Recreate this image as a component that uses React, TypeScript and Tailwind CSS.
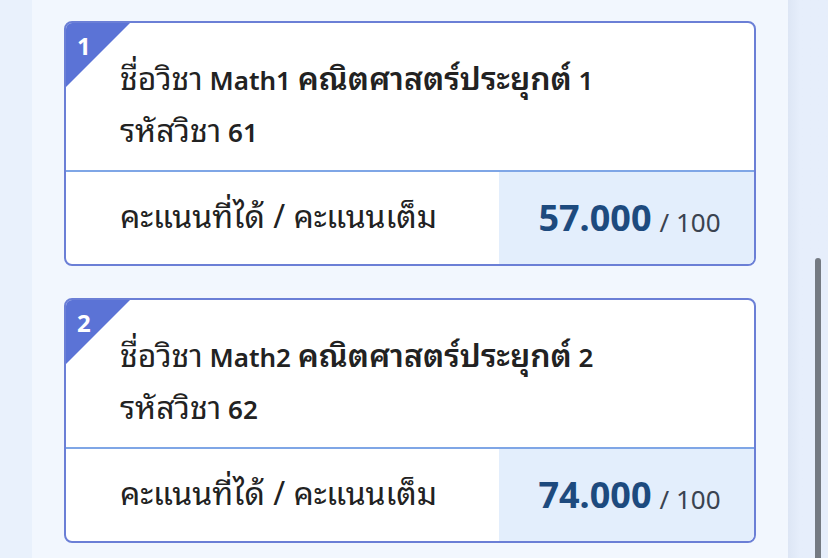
import type { ReactNode } from "react"

const font = `font-['Noto_Sans','Noto_Sans_Thai_Looped','Liberation_Sans',sans-serif]`

// Thai runs are set larger so they sit level with the Latin text next to them
function Th({ children, bold }: { children: ReactNode; bold?: boolean }) {
  return <span className={`text-[32px] ${bold ? "font-semibold" : "font-normal"}`}>{children}</span>
}

type Subject = {
  no: number
  name: string
  title: string
  suffix: string
  code: string
  score: string
  full: number
}

const subjects: Subject[] = [
  { no: 1, name: "Math1", title: "คณิตศาสตร์ประยุกต์", suffix: "1", code: "61", score: "57.000", full: 100 },
  { no: 2, name: "Math2", title: "คณิตศาสตร์ประยุกต์", suffix: "2", code: "62", score: "74.000", full: 100 },
]

function SubjectCard({ s }: { s: Subject }) {
  return (
    <div className="relative shrink-0 overflow-hidden rounded-lg border-2 border-[#6b7fd6] bg-white">
      {/* corner ribbon with the running number */}
      <div className="absolute left-0 top-0 h-[64px] w-[64px] bg-[#5b73d6] [clip-path:polygon(0_0,100%_0,0_100%)]" />
      <span className="absolute left-[11px] top-[11px] text-[24px] font-bold leading-none text-white">
        {s.no}
      </span>

      <div className="flex h-[147px] flex-col justify-center gap-[10px] pl-[54px] pt-[16px] text-[26px] leading-[40px] text-[#222]">
        <div>
          <Th>ชื่อวิชา</Th>{" "}
          <span className="font-semibold">
            {s.name} <Th bold>{s.title}</Th> {s.suffix}
          </span>
        </div>
        <div>
          <Th>รหัสวิชา</Th> <span className="font-semibold">{s.code}</span>
        </div>
      </div>

      <div className="flex h-[94px] border-t-2 border-[#7fa6e6]">
        <div className="flex flex-1 items-center pl-[54px] pb-[4px] text-[26px] leading-[40px] text-[#222]">
          <Th>คะแนนที่ได้ / คะแนนเต็ม</Th>
        </div>
        <div className="flex w-[255px] items-center justify-center bg-[#e3eefc] pl-[6px]">
          <span className="text-[36px] font-bold text-[#1d4a7e]">{s.score}</span>
          <span className="ml-[8px] mt-[8px] text-[26px] text-[#3a4350]">/ {s.full}</span>
        </div>
      </div>
    </div>
  )
}

export default function App() {
  return (
    <div className={`flex h-[558px] w-[828px] overflow-hidden bg-[#e9f1fc] ${font}`}>
      <div className="w-[32px] shrink-0" />
      <div className="flex w-[756px] shrink-0 flex-col gap-[32px] bg-[#f2f7fe] pl-[32px] pr-[32px] pt-[21px]">
        {subjects.map((s) => (
          <SubjectCard key={s.no} s={s} />
        ))}
      </div>
      {/* scroll track */}
      <div className="relative flex-1 bg-gradient-to-r from-[#dde6f5] to-[#e6eefb] to-30%">
        <div className="absolute left-[27px] top-[258px] h-[320px] w-[6px] rounded-full bg-[#747a82]" />
      </div>
    </div>
  )
}
